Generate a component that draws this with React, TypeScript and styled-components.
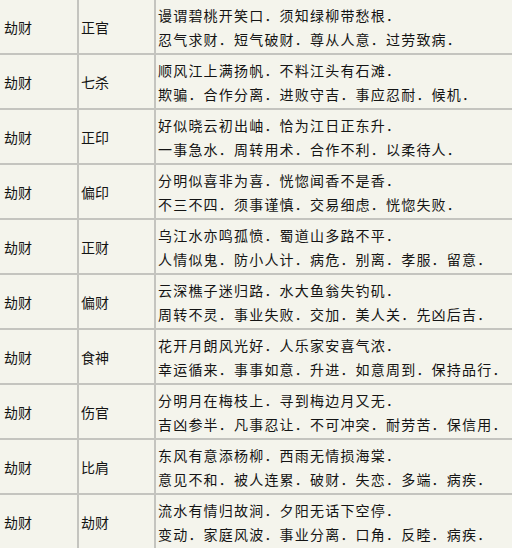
import React from 'react'
import styled, { createGlobalStyle } from 'styled-components'

const rows = [
  { a: '劫财', b: '正官', l1: '谩谓碧桃开笑口．须知绿柳带愁根．', l2: '忍气求财．短气破财．尊从人意．过劳致病．' },
  { a: '劫财', b: '七杀', l1: '顺风江上满扬帆．不料江头有石滩．', l2: '欺骗．合作分离．进败守吉．事应忍耐．候机．' },
  { a: '劫财', b: '正印', l1: '好似晓云初出岫．恰为江日正东升．', l2: '一事急水．周转用术．合作不利．以柔待人．' },
  { a: '劫财', b: '偏印', l1: '分明似喜非为喜．恍惚闻香不是香．', l2: '不三不四．须事谨慎．交易细虑．恍惚失败．' },
  { a: '劫财', b: '正财', l1: '乌江水亦鸣孤愤．蜀道山多路不平．', l2: '人情似鬼．防小人计．病危．别离．孝服．留意．' },
  { a: '劫财', b: '偏财', l1: '云深樵子迷归路．水大鱼翁失钓矶．', l2: '周转不灵．事业失败．交加．美人关．先凶后吉．' },
  { a: '劫财', b: '食神', l1: '花开月朗风光好．人乐家安喜气浓．', l2: '幸运循来．事事如意．升进．如意周到．保持品行．' },
  { a: '劫财', b: '伤官', l1: '分明月在梅枝上．寻到梅边月又无．', l2: '吉凶参半．凡事忍让．不可冲突．耐劳苦．保信用．' },
  { a: '劫财', b: '比肩', l1: '东风有意添杨柳．西雨无情损海棠．', l2: '意见不和．被人连累．破财．失恋．多端．病疾．' },
  { a: '劫财', b: '劫财', l1: '流水有情归故涧．夕阳无话下空停．', l2: '变动．家庭风波．事业分离．口角．反睦．病疾．' },
]

const GlobalStyle = createGlobalStyle`
  html, body {
    margin: 0;
    padding: 0;
    background: #f4f4ec;
  }
  body {
    font-family: "Noto Sans CJK SC", "DejaVu Sans", sans-serif;
    color: #141414;
  }
`

const Table = styled.div`
  width: 512px;
  overflow: hidden;
`

const Row = styled.div`
  display: grid;
  grid-template-columns: 79px 77px 1fr;
  height: 55px;
  border-bottom: 2px solid #c4c4bf;
  box-sizing: border-box;
`

const Cell = styled.div<{ $pad: number; $last?: boolean }>`
  display: flex;
  flex-direction: column;
  justify-content: center;
  padding-left: ${p => p.$pad}px;
  border-right: ${p => (p.$last ? 'none' : '2px solid #c4c4bf')};
  font-size: 14px;
  line-height: 24px;
  white-space: nowrap;
`

const Verse = styled.div`
  letter-spacing: 1.2px;
`

export default function App() {
  return (
    <>
      <GlobalStyle />
      <Table>
        {rows.map((r, i) => (
          <Row key={i}>
            <Cell $pad={4}>{r.a}</Cell>
            <Cell $pad={2}>{r.b}</Cell>
            <Cell $pad={2} $last>
              <Verse>{r.l1}</Verse>
              <Verse>{r.l2}</Verse>
            </Cell>
          </Row>
        ))}
      </Table>
    </>
  )
}
